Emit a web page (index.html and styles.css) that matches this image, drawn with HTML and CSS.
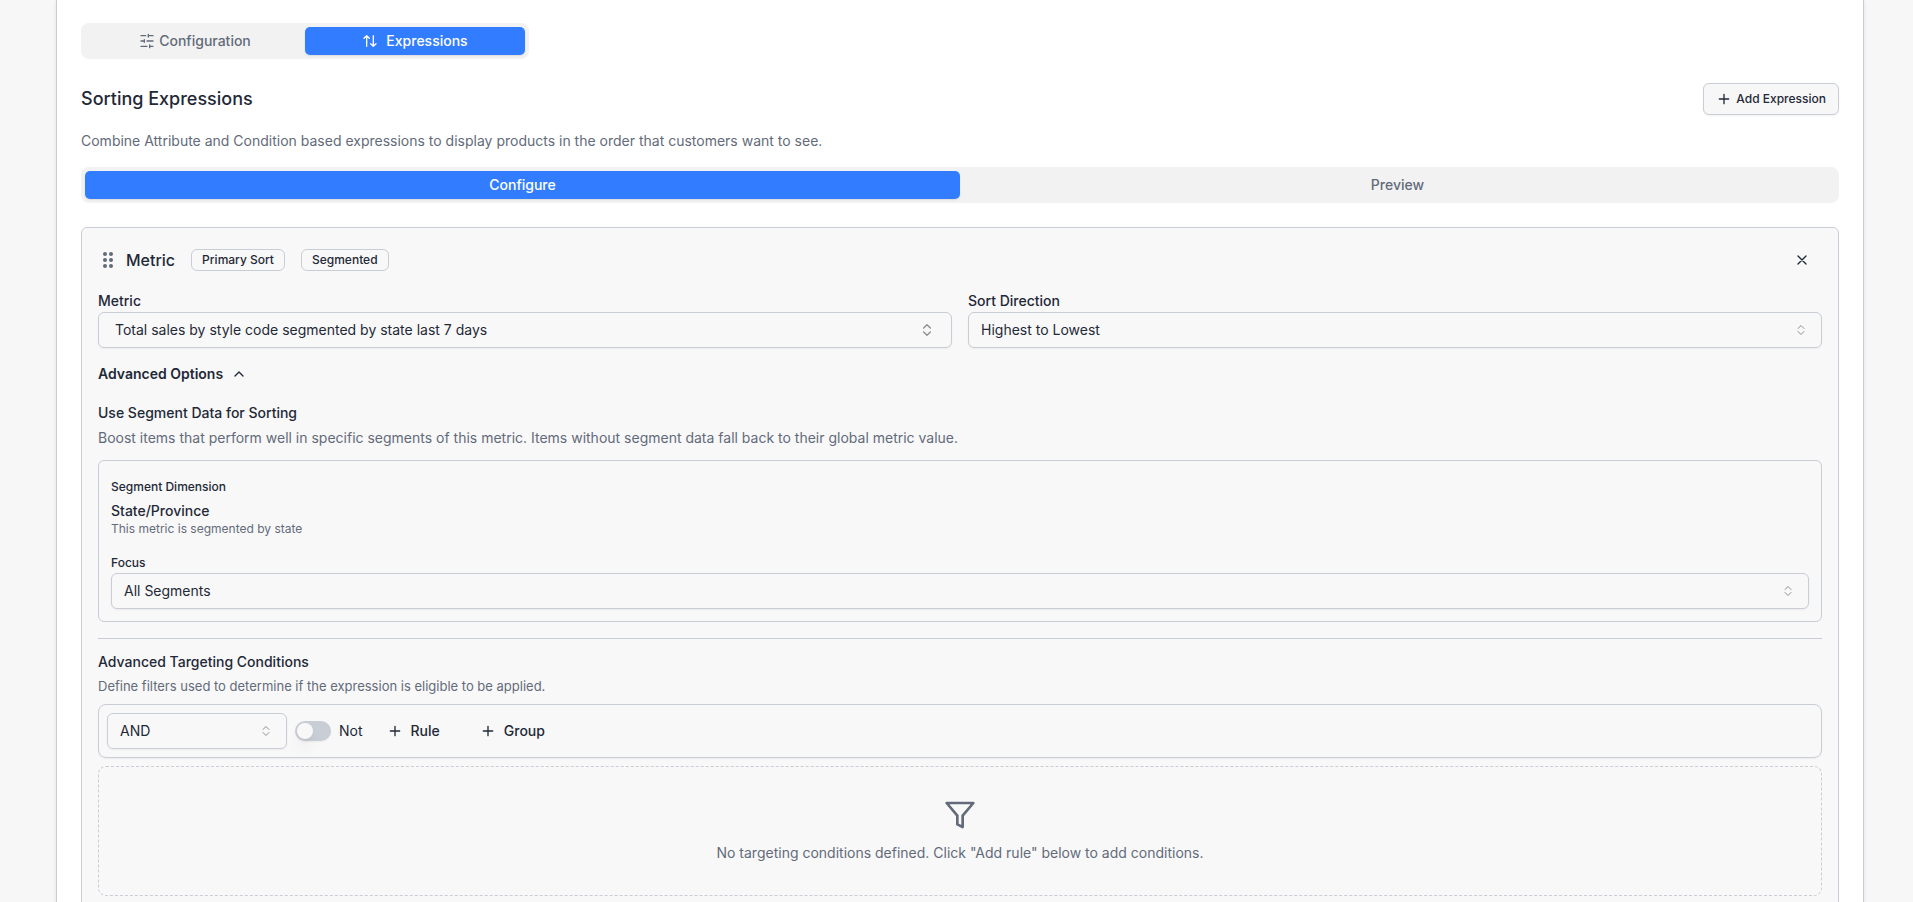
FILE: index.html
```html
<!DOCTYPE html>
<html lang="en">
<head>
    <meta charset="UTF-8">
    <meta name="viewport" content="width=device-width, initial-scale=1.0">
    <title>Sorting Expressions</title>
    <link rel="stylesheet" href="styles.css">
</head>
<body>
    <main class="panel">
        <div class="tabs tabs-main" role="tablist">
            <button class="tab" role="tab" type="button">
                <svg class="icon" viewBox="0 0 24 24"><path d="M21 4h-7M10 4H3M21 12h-9M8 12H3M21 20h-5M12 20H3M14 2v4M8 10v4M16 18v4"/></svg>
                Configuration
            </button>
            <button class="tab active spaced" role="tab" type="button" aria-selected="true">
                <svg class="icon" viewBox="0 0 24 24"><path d="M21 16l-4 4-4-4M17 20V4M3 8l4-4 4 4M7 4v16"/></svg>
                Expressions
            </button>
        </div>

        <header class="section-header">
            <h2>Sorting Expressions</h2>
            <button class="btn-outline" type="button">
                <svg class="icon" viewBox="0 0 24 24"><path d="M5 12h14M12 5v14"/></svg>
                Add Expression
            </button>
        </header>
        <p class="intro">Combine Attribute and Condition based expressions to display products in the order that customers want to see.</p>

        <div class="tabs" role="tablist">
            <button class="tab active" role="tab" type="button" aria-selected="true">Configure</button>
            <button class="tab" role="tab" type="button">Preview</button>
        </div>

        <section class="card">
            <div class="card-header">
                <svg class="grip" viewBox="0 0 20 20"><circle cx="7" cy="4" r="2"/><circle cx="13" cy="4" r="2"/><circle cx="7" cy="10" r="2"/><circle cx="13" cy="10" r="2"/><circle cx="7" cy="16" r="2"/><circle cx="13" cy="16" r="2"/></svg>
                <h3>Metric</h3>
                <span class="badge">Primary Sort</span>
                <span class="badge">Segmented</span>
                <button class="close" type="button" aria-label="Remove expression">
                    <svg class="icon" viewBox="0 0 24 24"><path d="M18 6L6 18M6 6l12 12"/></svg>
                </button>
            </div>

            <div class="fields">
                <div class="field">
                    <label for="metric">Metric</label>
                    <button class="combo" id="metric" type="button">
                        Total sales by style code segmented by state last 7 days
                        <svg class="icon" viewBox="0 0 24 24"><path d="M7 15l5 5 5-5M7 9l5-5 5 5"/></svg>
                    </button>
                </div>
                <div class="field">
                    <label for="direction">Sort Direction</label>
                    <div class="select">
                        <select id="direction">
                            <option>Highest to Lowest</option>
                            <option>Lowest to Highest</option>
                        </select>
                        <svg class="icon" viewBox="0 0 16 16"><path d="M5 6.500L8 3.500l3 3M5 9.500l3 3 3-3"/></svg>
                    </div>
                </div>
            </div>

            <button class="advanced" type="button" aria-expanded="true">
                Advanced Options
                <svg class="icon" viewBox="0 0 24 24"><path d="M18 15l-6-6-6 6"/></svg>
            </button>

            <h4 class="segment-title">Use Segment Data for Sorting</h4>
            <p class="segment-text">Boost items that perform well in specific segments of this metric. Items without segment data fall back to their global metric value.</p>

            <div class="segment-box">
                <span class="small-label">Segment Dimension</span>
                <strong>State/Province</strong>
                <p>This metric is segmented by state</p>
                <label class="small-label" for="focus">Focus</label>
                <div class="select">
                    <select id="focus">
                        <option>All Segments</option>
                    </select>
                    <svg class="icon" viewBox="0 0 16 16"><path d="M5 6.500L8 3.500l3 3M5 9.500l3 3 3-3"/></svg>
                </div>
            </div>

            <hr>

            <h4>Advanced Targeting Conditions</h4>
            <p class="targeting-text">Define filters used to determine if the expression is eligible to be applied.</p>

            <div class="rule-bar">
                <div class="select combinator">
                    <select aria-label="Combinator">
                        <option>AND</option>
                        <option>OR</option>
                    </select>
                    <svg class="icon" viewBox="0 0 16 16"><path d="M5 6.500L8 3.500l3 3M5 9.500l3 3 3-3"/></svg>
                </div>
                <label class="toggle"><input type="checkbox" role="switch"> Not</label>
                <button class="btn-ghost" type="button">
                    <svg class="icon" viewBox="0 0 24 24"><path d="M5 12h14M12 5v14"/></svg>
                    Rule
                </button>
                <button class="btn-ghost" type="button">
                    <svg class="icon" viewBox="0 0 24 24"><path d="M5 12h14M12 5v14"/></svg>
                    Group
                </button>
            </div>

            <div class="empty">
                <svg viewBox="0 0 24 24"><path d="M22 3H2l8 9.460V19l4 2v-8.540z"/></svg>
                <p>No targeting conditions defined. Click "Add rule" below to add conditions.</p>
            </div>
        </section>
    </main>
</body>
</html>
```
FILE: styles.css
```css
* {
    box-sizing: border-box;
}

body {
    margin: 0;
    height: 100vh;
    padding: 0 49px 0 56px;
    overflow: hidden;
    background: #f7f7f7;
    color: #1f2937;
    font-family: Inter, "Liberation Sans", sans-serif;
    font-size: 14px;
    line-height: 20px;
}

h2, h3, h4, p {
    margin: 0;
    font-weight: 500;
}

h2 {
    font-size: 18px;
}

h3 {
    font-size: 16px;
}

h4 {
    font-size: 14px;
}

p {
    font-weight: 400;
    color: #636b7a;
}

button, select {
    font: inherit;
    color: inherit;
    cursor: pointer;
}

button {
    display: flex;
    align-items: center;
    border: none;
    background: none;
    padding: 0;
}

.icon {
    width: 16px;
    height: 16px;
    flex: none;
    fill: none;
    stroke: currentColor;
    stroke-width: 2;
    stroke-linecap: round;
    stroke-linejoin: round;
}

.panel {
    min-height: 100vh;
    padding: 23px 24px 24px;
    background: #fff;
    border: solid #c9cdd5;
    border-width: 0 1px;
    box-shadow: 0 1px 3px rgba(0, 0, 0, 0.1);
}

/* tabs */
.tabs {
    display: grid;
    grid-template-columns: 1fr 1fr;
    padding: 4px;
    background: #f2f2f2;
    border-radius: 8px;
}

.tabs-main {
    max-width: 448px;
    margin-bottom: 24px;
}

.tab {
    height: 28px;
    justify-content: center;
    gap: 4px;
    border-radius: 5px;
    color: #636b7a;
    font-weight: 500;
}

.tab.spaced {
    gap: 8px;
}

.tab.active {
    background: #327dff;
    color: #fff;
    box-shadow: 0 1px 2px rgba(0, 0, 0, 0.1);
}

.section-header {
    display: flex;
    align-items: center;
    justify-content: space-between;
}

.btn-outline {
    height: 32px;
    padding: 0 12px;
    gap: 4px;
    border: 1px solid #c9cdd5;
    border-radius: 6px;
    background: #f7f7f7;
    box-shadow: 0 1px 2px rgba(0, 0, 0, 0.05);
    font-size: 12px;
    font-weight: 500;
}

.intro {
    margin: 16px 0;
}

/* expression card */
.card {
    margin-top: 24px;
    padding: 16px;
    border: 1px solid #c9cdd5;
    border-radius: 6px;
    background: #f8f8f8;
}

.card-header {
    display: flex;
    align-items: center;
    gap: 16px;
    height: 32px;
}

.grip {
    width: 20px;
    height: 20px;
    margin-right: -8px;
    fill: #636b7a;
}

.badge {
    padding: 2px 10px;
    border: 1px solid #c9cdd5;
    border-radius: 6px;
    font-size: 12px;
    font-weight: 500;
    line-height: 16px;
}

.close {
    width: 40px;
    height: 32px;
    margin-left: auto;
    justify-content: center;
}

.fields {
    display: grid;
    grid-template-columns: 1fr 1fr;
    gap: 16px;
    margin: 16px 0;
}

.field label {
    display: block;
    margin-bottom: 2px;
    font-weight: 500;
    line-height: 18px;
}

.combo, select {
    width: 100%;
    height: 36px;
    border: 1px solid #c9cdd5;
    border-radius: 6px;
    background: transparent;
    box-shadow: 0 1px 2px rgba(0, 0, 0, 0.05);
}

.combo {
    justify-content: space-between;
    padding: 0 16px;
}

.combo .icon {
    opacity: 0.5;
}

select {
    appearance: none;
    padding: 0 32px 0 12px;
}

.select {
    display: grid;
    align-items: center;
}

.select select, .select .icon {
    grid-area: 1 / 1;
}

.select .icon {
    justify-self: end;
    margin-right: 13px;
    stroke-width: 1;
    opacity: 0.5;
    pointer-events: none;
}

.advanced {
    gap: 8px;
    font-weight: 600;
}

.segment-title {
    margin-top: 19px;
}

.segment-text {
    margin: 5px 0 12px;
}

.segment-box {
    padding: 18px 12px 12px;
    border: 1px solid #c9cdd5;
    border-radius: 6px;
}

.segment-box strong {
    display: block;
    margin-top: 6px;
    font-weight: 500;
}

.segment-box p {
    margin-bottom: 18px;
    font-size: 12px;
    line-height: 16px;
}

.small-label {
    display: block;
    margin-bottom: 2px;
    font-size: 12px;
    font-weight: 500;
    line-height: 16px;
}

hr {
    margin: 16px 0 13px;
    border: none;
    border-top: 1px solid #c9cdd5;
}

.targeting-text {
    margin: 4px 0 8px;
    font-size: 13px;
}

/* rule builder */
.rule-bar {
    display: flex;
    align-items: center;
    gap: 8px;
    padding: 8px;
    border: 1px solid #c9cdd5;
    border-radius: 8px;
    box-shadow: 0 1px 2px rgba(0, 0, 0, 0.05);
}

.combinator {
    width: 180px;
}

.toggle {
    display: flex;
    align-items: center;
    gap: 8px;
}

.toggle input {
    appearance: none;
    display: flex;
    width: 36px;
    height: 20px;
    margin: 0;
    padding: 2px;
    border-radius: 10px;
    background: #c9cdd5;
    box-shadow: 0 1px 2px rgba(0, 0, 0, 0.05);
}

.toggle input::before {
    content: "";
    width: 16px;
    height: 16px;
    border-radius: 50%;
    background: #f8f8f8;
    box-shadow: 0 10px 15px -3px rgba(0, 0, 0, 0.1), 0 4px 6px -4px rgba(0, 0, 0, 0.1);
}

.toggle input:checked {
    background: #327dff;
    justify-content: flex-end;
}

.btn-ghost {
    height: 36px;
    padding: 0 16px;
    gap: 8px;
    font-weight: 500;
}

.empty {
    display: flex;
    flex-direction: column;
    align-items: center;
    gap: 12px;
    padding: 32px;
    margin-top: 8px;
    border: 1px dashed #c9cdd5;
    border-radius: 8px;
}

.empty svg {
    width: 32px;
    height: 32px;
    fill: none;
    stroke: #636b7a;
    stroke-width: 2;
    stroke-linejoin: round;
}
```
